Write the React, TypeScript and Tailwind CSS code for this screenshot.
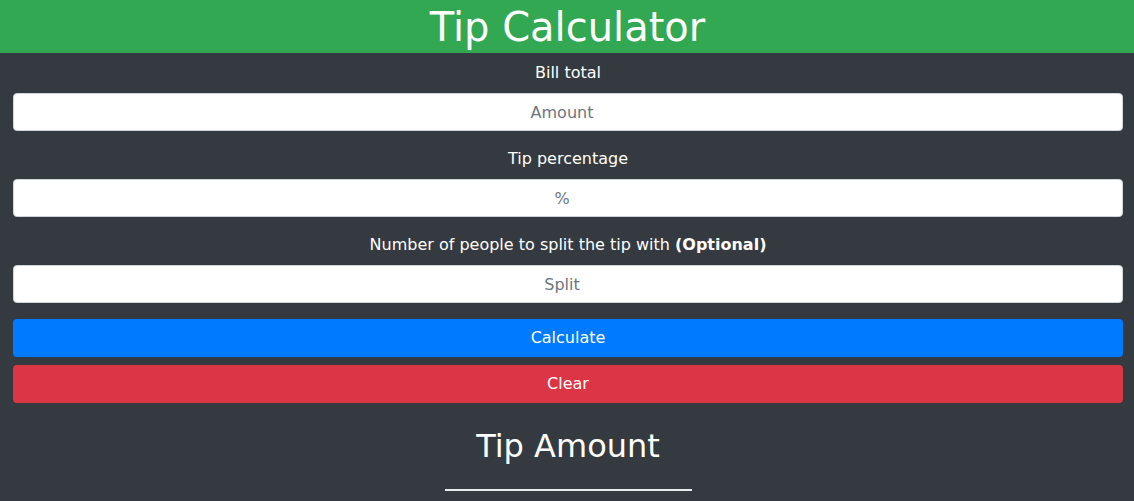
import React, { useState } from 'react'

const FONT = "font-['DejaVu_Sans',Verdana,sans-serif]"

const inputClass =
  'block w-full h-[38px] pl-3 pr-[24px] bg-white border border-[#ced4da] rounded-[4px] text-center text-base text-[#495057] placeholder:text-[#6c757d] focus:outline-none'

export default function App() {
  const [bill, setBill] = useState('')
  const [tip, setTip] = useState('')
  const [split, setSplit] = useState('')

  return (
    <div className={`${FONT} min-h-[501px] bg-[#343a40] text-white`}>
      {/* Header */}
      <header className="h-[53px] bg-[#32a852] flex items-center justify-center pl-px">
        <h1 className="text-[40px] leading-[48px] font-normal">Tip Calculator</h1>
      </header>

      <main className="w-[1110px] ml-[13px] pt-[8px] text-center">
        <div className="mb-4">
          <label className="block text-base leading-6 mb-2">Bill total</label>
          <input
            value={bill}
            onChange={(e) => setBill(e.target.value)}
            placeholder="Amount"
            className={inputClass}
          />
        </div>

        <div className="mb-4">
          <label className="block text-base leading-6 mb-2">Tip percentage</label>
          <input
            value={tip}
            onChange={(e) => setTip(e.target.value)}
            placeholder="%"
            className={inputClass}
          />
        </div>

        <div className="mb-4">
          <label className="block text-base leading-6 mb-2">
            Number of people to split the tip with <b>(Optional)</b>
          </label>
          <input
            value={split}
            onChange={(e) => setSplit(e.target.value)}
            placeholder="Split"
            className={inputClass}
          />
        </div>

        <div className="flex flex-col gap-2">
          <button className="h-[38px] w-full rounded-[4px] bg-[#007bff] text-base text-white">
            Calculate
          </button>
          <button
            onClick={() => {
              setBill('')
              setTip('')
              setSplit('')
            }}
            className="h-[38px] w-full rounded-[4px] bg-[#dc3545] text-base text-white"
          >
            Clear
          </button>
        </div>

        <h2 className="mt-[24px] text-[32px] leading-[38px] font-normal">Tip Amount</h2>
        <div className="mx-auto mt-[24px] w-[247px] h-[2px] bg-[#e9ecef]" />
      </main>
    </div>
  )
}
